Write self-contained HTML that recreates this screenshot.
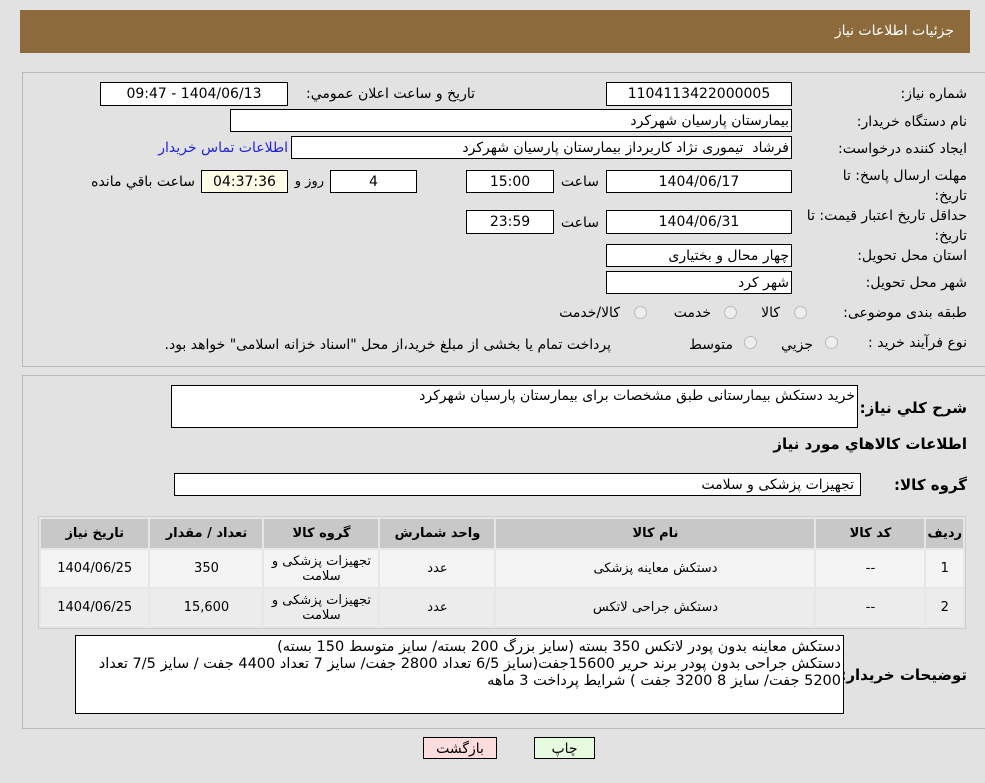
<!DOCTYPE html>
<html><head><meta charset="utf-8"><style>
body{margin:0;width:985px;height:783px;background:#e2e2e2;font-family:Tahoma,"DejaVu Sans","Liberation Sans",sans-serif;font-size:13px;color:#000;position:relative;overflow:hidden;direction:rtl}
.a{position:absolute;white-space:nowrap}
.box{position:absolute;background:#fff;border:1px solid #000;box-sizing:border-box;text-align:center;line-height:22px;font-size:14px}
.lbl{position:absolute;white-space:nowrap;font-size:14px}
.panel{position:absolute;border:1px solid #b8b8b8;background:#e2e2e2}
table{border-collapse:separate;border-spacing:2px;position:absolute;left:38px;top:516px;width:928px;background:#e6e6e6;border:1px solid #ccc}
th{background:#c8c8c8;height:27px;font-size:13px;font-weight:bold}
td{background:#f4f4f4;text-align:center;height:35px;font-size:13px}
tr.r2 td{background:#ececec}
.rad{position:absolute;width:11px;height:11px;border-radius:50%;border:1px solid #bbb;background:#eee}
</style></head><body>
<div class="a" style="left:20px;top:10px;width:950px;height:43px;background:#8c6a3c;"></div>
<div class="a" style="right:31px;top:23px;color:#fff;font-size:14px">جزئیات اطلاعات نیاز</div>

<div class="panel" style="left:22px;top:72px;width:963px;height:293px"></div>
<div class="lbl" style="right:18px;top:86px">شماره نیاز:</div>
<div class="box" style="left:606px;top:82px;width:186px;height:24px">1104113422000005</div>
<div class="lbl" style="right:510px;top:86px">تاریخ و ساعت اعلان عمومي:</div>
<div class="box" style="left:100px;top:82px;width:188px;height:24px">1404/06/13 - 09:47</div>

<div class="lbl" style="right:18px;top:114px">نام دستگاه خریدار:</div>
<div class="box" style="left:230px;top:109px;width:562px;height:23px;text-align:right;padding-right:2px">بیمارستان پارسیان شهرکرد</div>

<div class="lbl" style="right:18px;top:141px">ایجاد کننده درخواست:</div>
<div class="box" style="left:291px;top:136px;width:501px;height:23px;text-align:right;padding-right:2px">فرشاد &nbsp;تیموری نژاد کاربرداز بیمارستان پارسیان شهرکرد</div>
<div class="lbl" style="right:697px;top:140px;color:#2222dd">اطلاعات تماس خریدار</div>

<div class="lbl" style="right:18px;top:166px;line-height:20px;text-align:right">مهلت ارسال پاسخ: تا<br>تاریخ:</div>
<div class="box" style="left:606px;top:170px;width:186px;height:23px">1404/06/17</div>
<div class="lbl" style="right:386px;top:174px">ساعت</div>
<div class="box" style="left:466px;top:170px;width:88px;height:23px">15:00</div>
<div class="box" style="left:330px;top:170px;width:87px;height:23px">4</div>
<div class="lbl" style="right:661px;top:174px;font-size:13px">روز و</div>
<div class="box" style="left:201px;top:170px;width:87px;height:23px;background:#fefee8">04:37:36</div>
<div class="lbl" style="right:790px;top:174px">ساعت باقي مانده</div>

<div class="lbl" style="right:18px;top:206px;line-height:20px;text-align:right">حداقل تاریخ اعتبار قیمت: تا<br>تاریخ:</div>
<div class="box" style="left:606px;top:210px;width:186px;height:24px">1404/06/31</div>
<div class="lbl" style="right:386px;top:215px">ساعت</div>
<div class="box" style="left:466px;top:210px;width:88px;height:24px">23:59</div>

<div class="lbl" style="right:18px;top:248px">استان محل تحویل:</div>
<div class="box" style="left:606px;top:244px;width:186px;height:23px;text-align:right;padding-right:2px">چهار محال و بختیاری</div>
<div class="lbl" style="right:18px;top:275px">شهر محل تحویل:</div>
<div class="box" style="left:606px;top:271px;width:186px;height:23px;text-align:right;padding-right:2px">شهر کرد</div>

<div class="lbl" style="right:18px;top:305px">طبقه بندی موضوعی:</div>
<div class="rad" style="left:794px;top:306px"></div><div class="lbl" style="right:205px;top:305px">کالا</div>
<div class="rad" style="left:724px;top:306px"></div><div class="lbl" style="right:274px;top:305px">خدمت</div>
<div class="rad" style="left:634px;top:306px"></div><div class="lbl" style="right:365px;top:305px">کالا/خدمت</div>

<div class="lbl" style="right:18px;top:335px">نوع فرآیند خرید :</div>
<div class="rad" style="left:825px;top:336px"></div><div class="lbl" style="right:172px;top:337px">جزیي</div>
<div class="rad" style="left:744px;top:336px"></div><div class="lbl" style="right:252px;top:337px">متوسط</div>
<div class="lbl" style="right:374px;top:337px">پرداخت تمام یا بخشی از مبلغ خرید،از محل "اسناد خزانه اسلامی" خواهد بود.</div>

<div class="panel" style="left:22px;top:375px;width:963px;height:352px"></div>
<div class="lbl" style="right:18px;top:399px;font-weight:bold;font-size:15px">شرح کلي نیاز:</div>
<div class="box" style="left:171px;top:385px;width:687px;height:43px;text-align:right;padding-right:2px;line-height:20px">خرید دستکش بیمارستانی طبق مشخصات برای بیمارستان پارسیان شهرکرد</div>
<div class="lbl" style="right:18px;top:435px;font-weight:bold;font-size:15px">اطلاعات کالاهاي مورد نیاز</div>
<div class="lbl" style="right:18px;top:476px;font-weight:bold;font-size:15px">گروه کالا:</div>
<div class="box" style="left:174px;top:473px;width:687px;height:23px;text-align:right;padding-right:6px">تجهیزات پزشکی و سلامت</div>

<table>
<tr><th style="width:32px">ردیف</th><th style="width:106px">کد کالا</th><th style="width:316px">نام کالا</th><th style="width:112px">واحد شمارش</th><th style="width:112px">گروه کالا</th><th style="width:110px">تعداد / مقدار</th><th>تاریخ نیاز</th></tr>
<tr><td>1</td><td>--</td><td>دستکش معاینه پزشکی</td><td>عدد</td><td>تجهیزات پزشکی و سلامت</td><td>350</td><td>1404/06/25</td></tr>
<tr class="r2"><td>2</td><td>--</td><td>دستکش جراحی لاتکس</td><td>عدد</td><td>تجهیزات پزشکی و سلامت</td><td>15,600</td><td>1404/06/25</td></tr>
</table>

<div class="lbl" style="right:18px;top:666px;font-weight:bold;font-size:15px">توضیحات خریدار:</div>
<div class="box" style="left:75px;top:635px;width:769px;height:79px;text-align:right;padding:3px 2px 0 0;line-height:17px;white-space:normal;font-size:14.5px">دستکش معاینه بدون پودر لاتکس 350 بسته (سایز بزرگ 200 بسته/ سایز متوسط 150 بسته)<br>دستکش جراحی بدون پودر برند حریر 15600جفت(سایز 6/5 تعداد 2800 جفت/ سایز 7 تعداد 4400 جفت / سایز 7/5 تعداد 5200 جفت/ سایز 8 3200 جفت ) شرایط پرداخت 3 ماهه</div>

<div class="box" style="left:423px;top:737px;width:74px;height:22px;background:#fcdcdc;font-size:14px">بازگشت</div>
<div class="box" style="left:534px;top:737px;width:61px;height:22px;background:#e6fbe0;font-size:14px">چاپ</div>
</body></html>
